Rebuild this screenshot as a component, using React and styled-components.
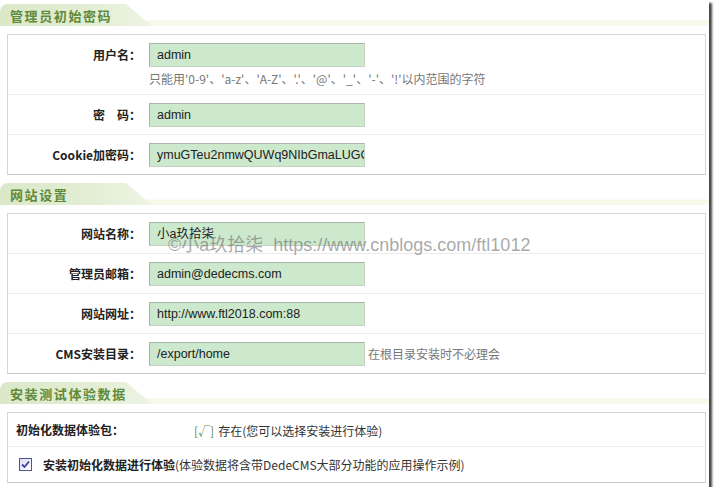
import React from 'react'
import styled, { createGlobalStyle } from 'styled-components'

const GlobalStyle = createGlobalStyle`
    html, body {
        margin: 0;
        padding: 0;
        background: #ffffff;
    }
    body {
        font-family: 'Liberation Sans', 'Noto Sans CJK SC', Arial, sans-serif;
        font-size: 12px;
        color: #333;
    }
`;

const Page = styled.div`
    position: relative;
    width: 709px;
    height: 487px;
    padding-top: 4px;
    box-sizing: border-box;
    background: #fff;
    box-shadow: 3px 3px 2px rgba(40, 40, 40, 0.85);
    overflow: hidden;
`;

const Section = styled.section`
    display: flex;
    flex-direction: column;
    gap: 8px;
    margin-bottom: 8px;
`;

const HeaderBar = styled.div`
    height: 22px;
    display: flex;
    align-items: stretch;
    background: linear-gradient(to bottom, #ffffff 0%, #ffffff 72%, #f6f8e6 78%, #f9faee 100%);
`;

const HeaderTab = styled.h2`
    margin: 0;
    width: 152px;
    box-sizing: border-box;
    padding-left: 10px;
    display: flex;
    align-items: center;
    font-family: 'Noto Sans CJK SC', sans-serif;
    font-size: 13px;
    font-weight: 700;
    letter-spacing: 1.6px;
    color: #5f8a3a;
    background: linear-gradient(to right, #dbe8c8 0%, #e3eed5 60%, #eef4e4 100%);
    border-top-left-radius: 8px;
    clip-path: polygon(0 0, 126px 0, 100% 100%, 0 100%);
`;

const Box = styled.div`
    margin: 0 3px 0 7px;
    border: 1px solid #d6d6d6;
    border-bottom-color: #c8c8c8;
    background: #fff;
`;

const Row = styled.div`
    display: grid;
    grid-template-columns: ${p => p.$labelWidth || 133}px 1fr;
    align-items: ${p => (p.$top ? 'start' : 'center')};
    padding: ${p => p.$pad || '8px 0 7px'};
    border-top: ${p => (p.$first ? 'none' : '1px solid #ececec')};
`;

const Label = styled.div`
    font-family: 'Noto Sans CJK SC', sans-serif;
    font-size: 12px;
    font-weight: 700;
    color: #222;
    text-align: ${p => (p.$left ? 'left' : 'right')};
    padding-left: ${p => (p.$left ? '8px' : '0')};
    line-height: 24px;
`;

const Field = styled.div`
    display: flex;
    flex-direction: column;
    gap: 4px;
    padding-left: 8px;
`;

const Inline = styled.div`
    display: flex;
    align-items: center;
    gap: 3px;
`;

const Input = styled.div`
    width: 216px;
    height: 24px;
    box-sizing: border-box;
    padding-left: 7px;
    border: 1px solid #a9b5a9;
    border-right-color: #c5d3c5;
    border-bottom-color: #c5d3c5;
    background: #cce8cd;
    font-family: 'Liberation Sans', 'Noto Sans CJK SC', Arial, sans-serif;
    font-size: 12.5px;
    line-height: 22px;
    color: #222;
    white-space: nowrap;
    overflow: hidden;
`;

const Hint = styled.span`
    font-family: 'Noto Sans CJK SC', sans-serif;
    font-size: 12px;
    color: #777;
    line-height: 16px;
`;

const Value = styled.div`
    font-family: 'Noto Sans CJK SC', sans-serif;
    font-size: 12px;
    color: #333;
`;

const Ok = styled.span`
    color: #5f8a3a;
    margin-right: 4px;
`;

const CheckRow = styled.div`
    display: flex;
    align-items: center;
    gap: 11px;
    padding: 9px 0 9px 11px;
    border-top: 1px solid #ececec;
    font-family: 'Noto Sans CJK SC', sans-serif;
    font-size: 12px;
    color: #333;
`;

const CheckBox = styled.span`
    width: 13px;
    height: 13px;
    box-sizing: border-box;
    border: 1px solid #4a5a8a;
    background: linear-gradient(135deg, #dcdcf0 0%, #ffffff 100%);
    display: flex;
    align-items: center;
    justify-content: center;
`;

const Strong = styled.b`
    font-weight: 700;
    color: #222;
`;

const Watermark = styled.div`
    position: absolute;
    left: 168px;
    top: 230px;
    font-family: 'Liberation Sans', 'Noto Sans CJK SC', Arial, sans-serif;
    font-size: 18px;
    color: rgba(110, 110, 110, 0.6);
    white-space: nowrap;
    pointer-events: none;
`;

function FormRow({ label, value, hint, side, first }) {
    return (
        <Row $first={first} $top={!!hint}>
            <Label>{label}</Label>
            <Field>
                <Inline>
                    <Input>{value}</Input>
                    {side && <Hint>{side}</Hint>}
                </Inline>
                {hint && <Hint>{hint}</Hint>}
            </Field>
        </Row>
    )
}

function Header({ title }) {
    return (
        <HeaderBar>
            <HeaderTab>{title}</HeaderTab>
        </HeaderBar>
    )
}

export default function App() {
    return (
        <Page>
            <GlobalStyle />
            <Section>
                <Header title="管理员初始密码" />
                <Box>
                    <FormRow first label="用户名：" value="admin"
                        hint="只能用'0-9'、'a-z'、'A-Z'、'.'、'@'、'_'、'-'、'!'以内范围的字符" />
                    <FormRow label="密　码：" value="admin" />
                    <FormRow label="Cookie加密码：" value="ymuGTeu2nmwQUWq9NIbGmaLUGG" />
                </Box>
            </Section>
            <Section>
                <Header title="网站设置" />
                <Box>
                    <FormRow first label="网站名称：" value="小a玖拾柒" />
                    <FormRow label="管理员邮箱：" value="admin@dedecms.com" />
                    <FormRow label="网站网址：" value="http://www.ftl2018.com:88" />
                    <FormRow label="CMS安装目录：" value="/export/home" side="在根目录安装时不必理会" />
                </Box>
            </Section>
            <Section>
                <Header title="安装测试体验数据" />
                <Box>
                    <Row $first $labelWidth={186} $pad="5px 0 4px">
                        <Label $left>初始化数据体验包：</Label>
                        <Value><Ok>[√]</Ok>存在(您可以选择安装进行体验)</Value>
                    </Row>
                    <CheckRow>
                        <CheckBox>
                            <svg width="9" height="9" viewBox="0 0 9 9">
                                <path d="M1 4.5 L3.5 7 L8 1.5" fill="none" stroke="#3b3f9a" strokeWidth="1.8" />
                            </svg>
                        </CheckBox>
                        <span><Strong>安装初始化数据进行体验</Strong>(体验数据将含带DedeCMS大部分功能的应用操作示例)</span>
                    </CheckRow>
                </Box>
            </Section>
            <Watermark>©小a玖拾柒&nbsp;&nbsp;https://www.cnblogs.com/ftl1012</Watermark>
        </Page>
    )
}
